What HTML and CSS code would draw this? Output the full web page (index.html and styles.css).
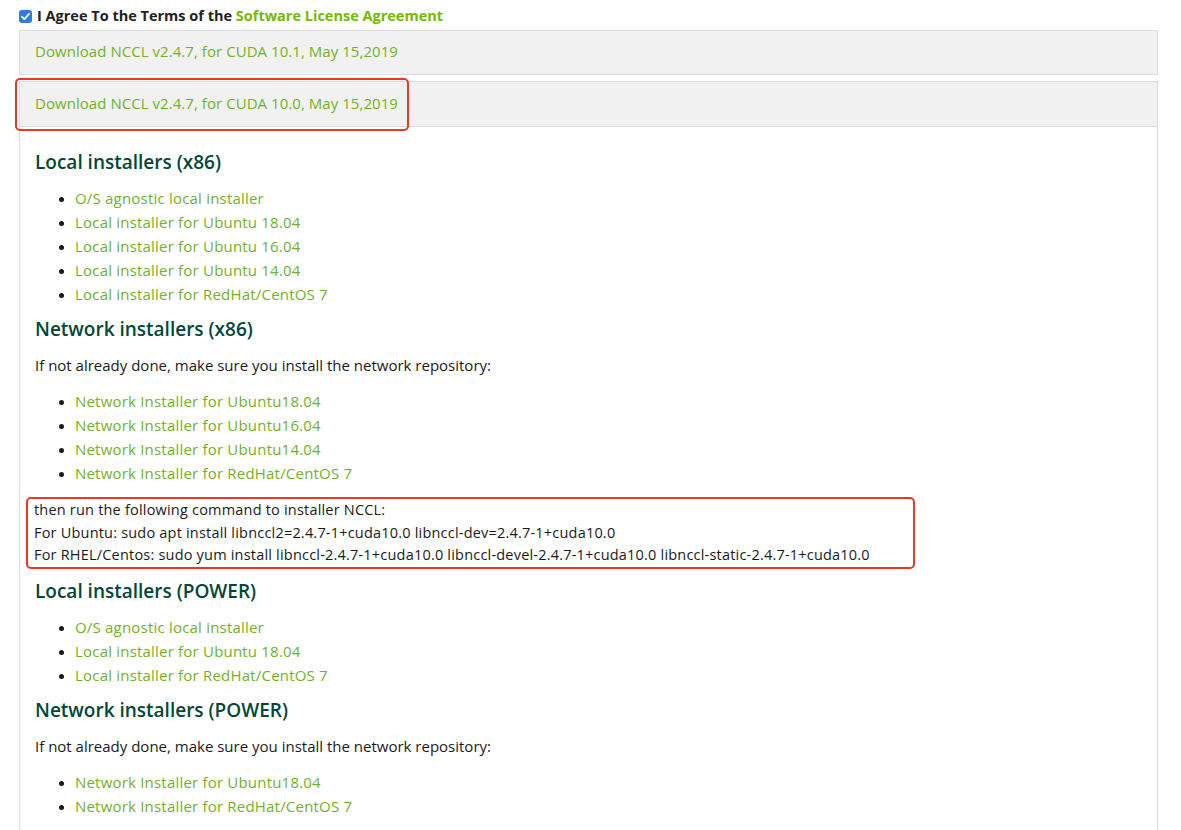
FILE: index.html
```html
<!DOCTYPE html>
<html>
<head>
<meta charset="utf-8">
<link rel="stylesheet" href="styles.css">
</head>
<body>
<div class="page">
  <div class="agree">
    <span class="check"><svg width="13" height="13" viewBox="0 0 13 13"><rect x="0" y="0" width="13" height="13" rx="3" fill="#2f7ae5"/><path d="M3 6.8 L5.4 9.2 L10 3.9" fill="none" stroke="#fff" stroke-width="1.8" stroke-linecap="round" stroke-linejoin="round"/></svg></span>
    <span class="agree-text">I Agree To the Terms of the <a class="agree-link">Software License Agreement</a></span>
  </div>

  <div class="panel closed">
    <div class="panel-head"><a class="link">Download NCCL v2.4.7, for CUDA 10.1, May 15,2019</a></div>
  </div>

  <div class="panel open">
    <div class="panel-head marked"><a class="link">Download NCCL v2.4.7, for CUDA 10.0, May 15,2019</a><span class="mark mark-head"></span></div>
    <div class="panel-body">
      <h3>Local installers (x86)</h3>
      <ul>
        <li><a class="link">O/S agnostic local installer</a></li>
        <li><a class="link">Local installer for Ubuntu 18.04</a></li>
        <li><a class="link">Local installer for Ubuntu 16.04</a></li>
        <li><a class="link">Local installer for Ubuntu 14.04</a></li>
        <li><a class="link">Local installer for RedHat/CentOS 7</a></li>
      </ul>
      <h3>Network installers (x86)</h3>
      <p>If not already done, make sure you install the network repository:</p>
      <ul>
        <li><a class="link">Network Installer for Ubuntu18.04</a></li>
        <li><a class="link">Network Installer for Ubuntu16.04</a></li>
        <li><a class="link">Network Installer for Ubuntu14.04</a></li>
        <li><a class="link">Network Installer for RedHat/CentOS 7</a></li>
      </ul>
      <div class="cmd">
        <div>then run the following command to installer NCCL:</div>
        <div>For Ubuntu: sudo apt install libnccl2=2.4.7-1+cuda10.0 libnccl-dev=2.4.7-1+cuda10.0</div>
        <div>For RHEL/Centos: sudo yum install libnccl-2.4.7-1+cuda10.0 libnccl-devel-2.4.7-1+cuda10.0 libnccl-static-2.4.7-1+cuda10.0</div>
      </div>
      <h3>Local installers (POWER)</h3>
      <ul>
        <li><a class="link">O/S agnostic local installer</a></li>
        <li><a class="link">Local installer for Ubuntu 18.04</a></li>
        <li><a class="link">Local installer for RedHat/CentOS 7</a></li>
      </ul>
      <h3>Network installers (POWER)</h3>
      <p>If not already done, make sure you install the network repository:</p>
      <ul>
        <li><a class="link">Network Installer for Ubuntu18.04</a></li>
        <li><a class="link">Network Installer for RedHat/CentOS 7</a></li>
      </ul>
    </div>
  </div>
</div>
</body>
</html>
```
FILE: styles.css
```css
html, body {
  margin: 0;
  padding: 0;
  background: #fff;
}
body {
  font-family: "Open Sans", "Liberation Sans", sans-serif;
  font-size: 15px;
  line-height: 24px;
  color: #1a1a1a;
  overflow: hidden;
}
.page {
  padding: 4px 23px 0 19px;
}
.agree {
  display: flex;
  align-items: center;
  height: 24px;
  margin-bottom: 2px;
}
.check {
  display: flex;
  width: 13px;
  height: 13px;
  margin-right: 5px;
}
.agree-text {
  font-weight: bold;
  font-size: 14.5px;
  color: #222;
}
.agree-link {
  color: #76b900;
}
.link {
  color: #72b12a;
  text-decoration: none;
  letter-spacing: 0.2px;
}
.panel {
  border: 1px solid #dcdcdc;
}
.panel.closed {
  margin-bottom: 6px;
}
.panel.open {
  border-bottom: none;
}
.panel-head {
  background: #f2f1f1;
  height: 40px;
  padding-bottom: 3px;
  display: flex;
  align-items: center;
  padding-left: 15px;
}
.panel-head .link {
  letter-spacing: 0.05px;
}
.panel.open .panel-head {
  border-bottom: 1px solid #dcdcdc;
  height: 41px;
}
.marked {
  position: relative;
}
.mark {
  position: absolute;
  border: 2px solid #e8391f;
  border-radius: 5px;
  pointer-events: none;
}
.mark-head {
  left: -5px;
  top: -4px;
  width: 390px;
  height: 49px;
}
.panel-body {
  padding: 13px 15px 40px 15px;
}
h3 {
  font-size: 19px;
  font-weight: 600;
  line-height: 23px;
  color: #00473a;
  margin: 11px 0;
}
ul {
  margin: 12px 0;
  padding-left: 40px;
}
li::marker {
  font-size: 13px;
}
p {
  margin: 12px 0;
}
.cmd {
  box-sizing: border-box;
  width: 889px;
  margin: 12px 0 11px -9px;
  padding: 0 6px;
  border: 2px solid #e8391f;
  border-radius: 5px;
  font-size: 14.5px;
  letter-spacing: 0.2px;
  line-height: 22.67px;
  white-space: nowrap;
}
```
